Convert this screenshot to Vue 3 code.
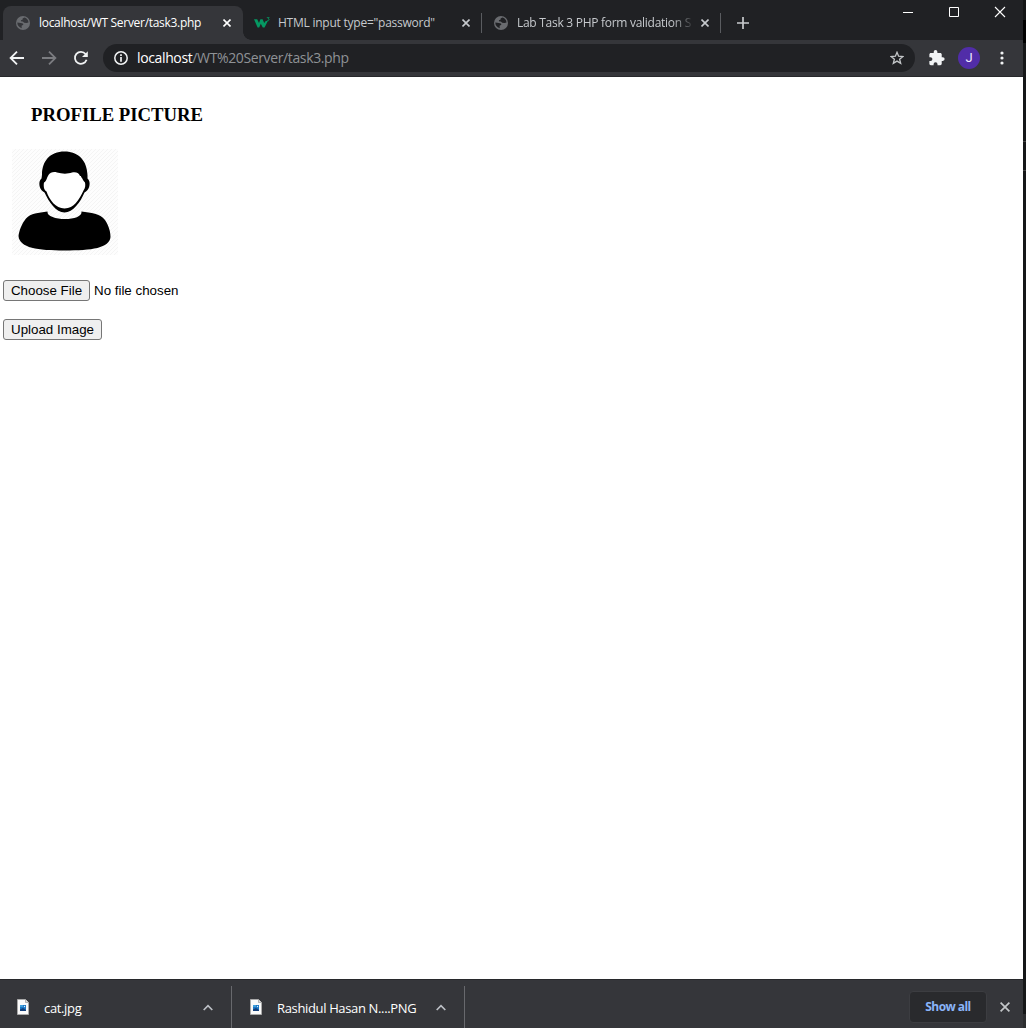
<script setup>
const tabs = [
  { title: 'localhost/WT Server/task3.php', icon: 'globe', active: true, cls: 't1' },
  { title: 'HTML input type="password"', icon: 'w3', active: false, cls: 't2' },
  { title: 'Lab Task 3 PHP form validation SP', icon: 'globe', active: false, cls: 't3' }
]
const downloads = [
  { name: 'cat.jpg', cls: 'd1' },
  { name: 'Rashidul Hasan N....PNG', cls: 'd2' }
]
</script>

<template>
  <div class="screen">
    <div class="window">
      <header class="tabstrip">
        <div v-for="t in tabs" :key="t.title" class="tab" :class="[t.cls, { active: t.active }]">
          <svg v-if="t.icon === 'globe'" class="fav" width="14" height="14" viewBox="0 0 14 14">
            <circle cx="7" cy="7" r="7" fill="#696b6f" />
            <path d="M1.3 6.600L4.800 6.900C6.600 7 7.400 7.700 7.300 8.700L5.600 9.800 5.700 12.300C3 11.500 1.200 9.400 1.300 6.600ZM8.300 1.500L6.600 2.600 6.700 3.600 5 4.300C4.600 5.400 5.600 5.700 6.800 5.600L8.200 6.800 10.400 7.100 12.500 6.400C12.300 3.800 10.700 2 8.300 1.500Z" :fill="t.active ? '#35363a' : '#202124'" />
          </svg>
          <svg v-else class="fav w3" width="16" height="12" viewBox="0 0 16 12">
            <path d="M0 2.200H3.200L5 6 6.400 2.200H8.600L10.200 6 11.800 4H13.800L10.600 10.500H8.800L6.800 6.800 5.200 10.500H3.600Z" fill="#059862" />
            <path d="M12.800.6H15.200L14 1.900C16 1.900 15.500 4.200 12.900 3.700" stroke-width=".8" fill="none" stroke="#059862" />
          </svg>
          <span class="title"><span>{{ t.title }}</span></span>
          <svg class="tclose" width="8" height="8" viewBox="0 0 8 8"><path d="M.5.5l7 7M7.5.5l-7 7" stroke="currentColor" stroke-width="1.6" /></svg>
        </div>
        <svg class="plus" width="12" height="12" viewBox="0 0 12 12"><path d="M6 0v12M0 6h12" stroke="#c8cacd" stroke-width="1.7" /></svg>
        <svg class="controls" width="104" height="14" viewBox="0 0 104 14" fill="none" stroke="#fff">
          <path d="M0 6.5h10" /><path d="M46.500 1.500h9v9h-9z" /><path d="M92 1l10 10M102 1L92 11" stroke-width="1.1" />
        </svg>
      </header>
      <div class="toolbar">
        <svg class="nav" width="86" height="18" viewBox="0 0 86 18" fill="none" stroke-width="1.8">
          <path d="M17 9H4M10 2.600L3.600 9l6.400 6.400" stroke="#f1f3f4" />
          <path d="M35 9h13M42 2.600L48.400 9 42 15.400" stroke="#7b7c80" />
          <path d="M78.600 5A6 6 0 1 0 79.600 10.800" stroke="#f1f3f4" />
          <path d="M80.800 2.200V8H75z" fill="#f1f3f4" />
        </svg>
        <div class="omnibox">
          <svg width="14" height="14" viewBox="0 0 14 14"><circle cx="7" cy="7" r="6.200" fill="none" stroke="#f1f3f4" stroke-width="1.500" /><path d="M7 3.300v1.600M7 6.100v4.700" stroke="#f1f3f4" stroke-width="1.700" /></svg>
          <span class="url"><b>localhost</b>/WT%20Server/task3.php</span>
          <svg class="star" width="14" height="14" viewBox="0 0 14 14"><path d="M7 1.300L8.600 5.200 12.900 5.500 9.600 8.200 10.700 12.400 7 10.100 3.300 12.400 4.400 8.200 1.100 5.500 5.400 5.200Z" fill="none" stroke="#c4c7c9" stroke-width="1.300" /></svg>
        </div>
        <svg class="puzzle" width="16" height="16" viewBox="2 1 21 22"><path fill="#f1f3f4" d="M20.500 11H19V7c0-1.100-.9-2-2-2h-4V3.500a2.500 2.500 0 0 0-5 0V5H4c-1.100 0-2 .9-2 2v3.800h1.500a2.700 2.700 0 0 1 0 5.400H2V20c0 1.100.9 2 2 2h3.800v-1.500a2.700 2.700 0 0 1 5.400 0V22H17c1.100 0 2-.9 2-2v-4h1.500a2.500 2.500 0 0 0 0-5z" /></svg>
        <span class="avatar">J</span>
        <svg class="dots" width="4" height="14" viewBox="0 0 4 14" fill="#f1f3f4"><circle cx="2" cy="2" r="1.600" /><circle cx="2" cy="7" r="1.600" /><circle cx="2" cy="12" r="1.600" /></svg>
      </div>

      <main class="page">
        <h3>PROFILE PICTURE</h3>
        <svg class="portrait" width="106" height="106" viewBox="0 0 106 106">
          <defs>
            <pattern id="hatch" width="4" height="4" patternUnits="userSpaceOnUse"><rect width="4" height="4" fill="#fdfdfd" /><path d="M-1 1l2-2M0 4l4-4M3 5l2-2" stroke="#f3f3f3" stroke-width=".9" /></pattern>
          </defs>
          <rect width="106" height="106" fill="url(#hatch)" />
          <path d="M52.500 2.500C38 2.500 30 12 30 26L29.500 29.500C26 32 27 40 31 42.500L32.500 43.500C37 53 44 63.500 52.500 63.500C61 63.500 68.500 53 72.500 43.500L74 42.500C78 40 79 32 75.500 29.500L75.500 26C75 12 67 2.500 52.500 2.500Z" fill="#000" />
          <path d="M36.500 26C38 23.500 41.500 22.500 45 23.500C50 25 56 25 60 23.500C64 22.500 67 24 69 27C70 29 71 31.500 73 33.500C73.500 36 73.500 39 71.500 41.500C67 51 62 59.500 52.500 59.500C43.500 59.500 37.500 51 34.500 42.500C31.500 41 31.500 36 32 33.500C34.500 32.500 34.500 29 36.500 26Z" fill="#fff" />
          <path d="M66.500 23.500l2 3.500.5-3M68.500 26l2 3" stroke="#000" stroke-width=".8" fill="none" />
          <path d="M35.500 62.500C34 72 71 73 69.500 62.500C79 64 88 64 93 71C97 77 98.500 83 98.500 88C97.500 99 80 101.500 52.500 101.500C26 101.500 7.500 99 6.500 87C7 82 9.500 75 14 69.500C19 64 26 64 35.500 62.500Z" fill="#000" />
        </svg>
        <div class="filerow"><button class="btn choose">Choose File</button><span>No file chosen</span></div>
        <button class="btn upload">Upload Image</button>
      </main>

      <footer class="shelf">
        <div v-for="d in downloads" :key="d.name" class="dl" :class="d.cls">
          <svg class="doc" width="12" height="16" viewBox="0 0 12 16">
            <path d="M.5.5h8l3 3v12H.5z" fill="#fafafa" stroke="#aaa" /><path d="M8.500.500v3h3" fill="#ddd" stroke="#999" stroke-width=".7" />
            <rect x="3" y="6" width="6" height="6" fill="#1b76c4" /><path d="M3 6h3v2H3z" fill="#3f9fdc" /><path d="M3 12V10.500L6 9l3 2v1z" fill="#123e79" /><circle cx="7.500" cy="7.500" r=".7" fill="#d5efff" />
          </svg>
          <span class="name"><span>{{ d.name }}</span></span>
          <svg class="chev" width="10" height="7" viewBox="0 0 10 7"><path d="M.7 6L5 1.700 9.300 6" fill="none" stroke="#bdc1c6" stroke-width="1.700" /></svg>
        </div>
        <button class="showall">Show all</button>
        <svg class="sclose" width="10" height="10" viewBox="0 0 10 10"><path d="M.6.6l8.800 8.800M9.400.6L.6 9.400" stroke="#c4c7c9" stroke-width="1.700" /></svg>
      </footer>
    </div>
    <div class="edge"></div>
  </div>
</template>

<style>
body { margin: 0; background: #fff; }
</style>

<style scoped>
* { box-sizing: border-box; }
svg { display: block; flex: none; }
.screen { display: flex; width: 1026px; height: 1028px; overflow: hidden; font-family: "Open Sans", "Noto Sans", sans-serif; }
.window { width: 1023px; display: flex; flex-direction: column; }
.edge { width: 3px; background: linear-gradient(#141516 0 20px, #000 20px 43px, #161718 43px 141px, #444 141px 142px, #161718 142px 170px, #444 170px 171px, #161718 171px 1014px, #2c2d2f 1014px); }
.tabstrip { height: 40px; background: #202124; display: flex; padding: 6px 0 0 3px; flex: none; }
.tab { position: relative; width: 239px; height: 34px; display: flex; align-items: center; padding-left: 12px; color: #c6c9cd; border-right: 1px solid transparent; }
.tab.active { width: 240px; background: #35363a; border-radius: 8px 8px 0 0; border: 0; color: #fff; padding-left: 13px; }
.tab.active::after { content: ""; position: absolute; right: -8px; bottom: 0; width: 8px; height: 8px; background: radial-gradient(circle at 100% 0, transparent 7.5px, #35363a 8px); }
.tab:not(.active)::before { content: ""; position: absolute; right: -1px; top: 7px; width: 1px; height: 20px; background: #5a5c60; }
.title { height: 20px; line-height: 20px; font-size: 12px; white-space: nowrap; overflow: hidden; margin-left: 9px; width: 175px; }
.t1 .title { letter-spacing: -.3px; }
.t2 .title { margin-left: 8px; letter-spacing: -.24px; }
.t3 .title { letter-spacing: -.28px; mask-image: linear-gradient(90deg, #000 155px, transparent 178px); }
.t2 .fav { margin-left: -1px; }
.tclose { margin-left: auto; margin-right: 12px; }
.t2 .tclose, .t3 .tclose { margin-right: 11px; }
.plus { margin: 11px 0 0 16px; }
.controls { margin-left: auto; margin-right: 16px; }
.toolbar { height: 37px; flex: none; background: #35363a; border-bottom: 1px solid #27282b; display: flex; align-items: center; padding-left: 7px; }
.nav { margin-right: 10px; }
.omnibox { width: 812px; height: 28px; border-radius: 14px; background: #202124; display: flex; align-items: center; padding: 0 11px; }
.url { margin-left: 9px; font-size: 14px; line-height: 20px; color: #8f9296; letter-spacing: -.37px; white-space: nowrap; }
.url b { color: #fff; font-weight: 400; }
.star { margin-left: auto; }
.puzzle { margin-left: 14px; }
.avatar { width: 22px; height: 22px; border-radius: 50%; background: #512da8; color: #f0eaff; font: 13px/22px Roboto, sans-serif; text-align: center; margin-left: 13px; }
.dots { margin-left: 19.5px; }
.page { flex: 1; background: #fff; display: flex; flex-direction: column; align-items: flex-start; font-family: "Liberation Sans", Arial, sans-serif; }
h3 { margin: 27px 0 0 31px; font: bold 18.72px/22px "Liberation Serif", serif; color: #000; white-space: nowrap; }
.portrait { margin: 23px 0 0 11.5px; }
.filerow { display: flex; align-items: center; margin: 25px 0 0 3px; font-size: 13.333px; gap: 4px; white-space: nowrap; }
.btn { height: 21px; padding: 0; border: 1px solid #767676; border-radius: 3px; background: #efefef; color: #000; font: 13.333px/17px "Liberation Sans", Arial, sans-serif; white-space: nowrap; }
.choose { width: 87px; }
.upload { width: 99px; margin: 18px 0 0 3px; }
.shelf { height: 49px; background: #35363a; border-top: 1px solid #27282b; display: flex; align-items: center; flex: none; }
.dl { width: 232px; height: 42px; margin-top: 6px; border-right: 1px solid #68696d; display: flex; align-items: center; padding-left: 17px; color: #fff; }
.d2 { width: 233px; padding-left: 18px; }
.doc { margin-top: -1px; }
.name { font-size: 13px; line-height: 20px; letter-spacing: -.35px; margin: 1px 0 0 15px; white-space: nowrap; }
.chev { margin: 1px 18px 0 auto; }
.showall { width: 78px; height: 32px; margin: 6px 0 0 auto; padding: 0; background: #292a2d; border: 1px solid #3c3d41; border-radius: 4px; color: #8ab4f8; font: 700 12px/18px "Open Sans", sans-serif; letter-spacing: -.55px; }
.sclose { margin: 6px 13px 0 13px; }
</style>
